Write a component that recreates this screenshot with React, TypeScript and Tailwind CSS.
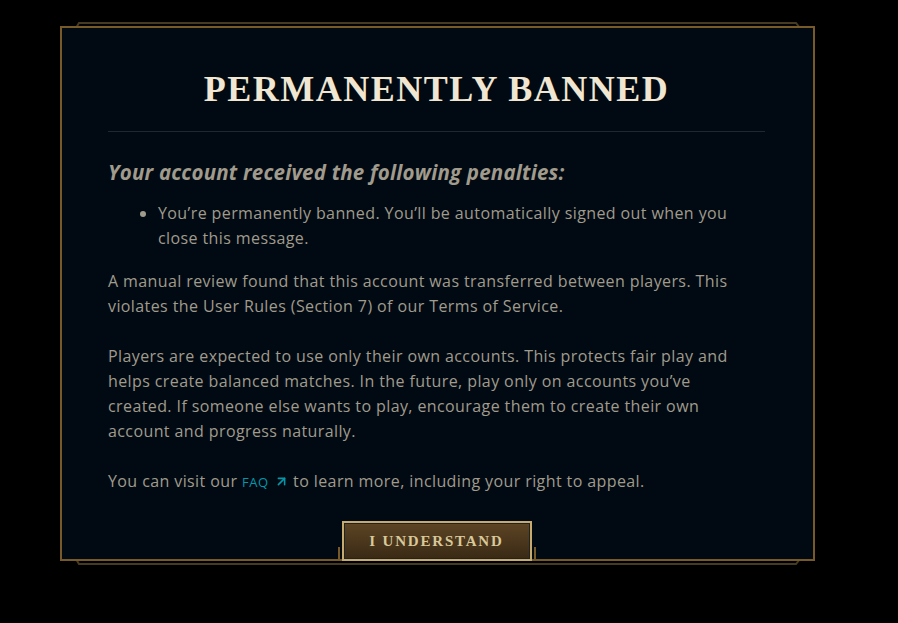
import React from "react";
import { ArrowUpRight } from "lucide-react";

export default function App() {
  return (
    <div className="w-[898px] h-[623px] bg-black overflow-hidden">
      <div className="pt-[26px] pl-[60px]">
        <div className="relative w-[755px]">
          {/* back frame lines */}
          <svg className="absolute left-[16px] top-[-6px] pointer-events-none" width="724" height="8" viewBox="0 0 724 8">
            <polyline points="0,8 3,3 720,3 724,8" fill="none" stroke="#463b22" strokeWidth="2" />
          </svg>
          <svg className="absolute left-[16px] bottom-[-6px] pointer-events-none" width="724" height="8" viewBox="0 0 724 8">
            <polyline points="0,0 3,5 720,5 724,0" fill="none" stroke="#463b22" strokeWidth="2" />
          </svg>

          <div className="relative border-2 border-[#785a28] bg-[#010a13] pl-[46px] pr-[48px] flex flex-col">
            <div className="pt-[40px] pb-[21px] border-b border-[#1e282d] text-center">
              <h1
                className="text-[36px] leading-[42px] font-bold tracking-[1.5px] text-[#f0e6d2]"
                style={{ fontFamily: '"Liberation Serif", serif' }}
              >
                PERMANENTLY BANNED
              </h1>
            </div>

            <div className="mr-[6px] text-[#a09b8c] text-[16px] leading-[25px] tracking-[0.4px]" style={{ fontFamily: '"Open Sans", sans-serif' }}>
              <h2 className="mt-[26px] text-[20.5px] leading-[28px] font-bold italic tracking-[0.2px] text-[#a09b8c]">
                Your account received the following penalties:
              </h2>
              <ul className="mt-[15px] pl-[50px] list-disc marker:text-[#a09b8c]">
                <li>You’re permanently banned. You’ll be automatically signed out when you close this message.</li>
              </ul>
              <p className="mt-[18px]">
                A manual review found that this account was transferred between players. This violates the User Rules (Section 7) of our Terms of Service.
              </p>
              <p className="mt-[25px]">
                Players are expected to use only their own accounts. This protects fair play and helps create balanced matches. In the future, play only on accounts you’ve created. If someone else wants to play, encourage them to create their own account and progress naturally.
              </p>
              <p className="mt-[25px]">
                You can visit our{" "}
                <span className="text-[13px] text-[#0397ab] tracking-[0.5px]">FAQ</span>
                <ArrowUpRight className="inline-block w-[15px] h-[15px] ml-[5px] mb-[2px] text-[#0397ab]" strokeWidth={2.5} />{" "}
                to learn more, including your right to appeal.
              </p>
            </div>

            <div className="mt-[26px] mb-[-2px] flex justify-center">
              <div className="relative">
                <div className="absolute left-[-4px] bottom-[1px] w-[2px] h-[13px] bg-[#785a28]" />
                <div className="absolute right-[-4px] bottom-[1px] w-[2px] h-[13px] bg-[#785a28]" />
                <button className="w-[190px] h-[40px] border-2 border-[#c8aa6e] p-0">
                  <div className="w-full h-full border border-[#1e2328] bg-gradient-to-b from-[#5c4424] to-[#3a2a15] flex items-center justify-center">
                    <span
                      className="text-[15px] font-bold tracking-[1.8px] text-[#d8c89a] pt-[1px]"
                      style={{ fontFamily: '"Liberation Serif", serif' }}
                    >
                      I UNDERSTAND
                    </span>
                  </div>
                </button>
              </div>
            </div>
          </div>
        </div>
      </div>
    </div>
  );
}
